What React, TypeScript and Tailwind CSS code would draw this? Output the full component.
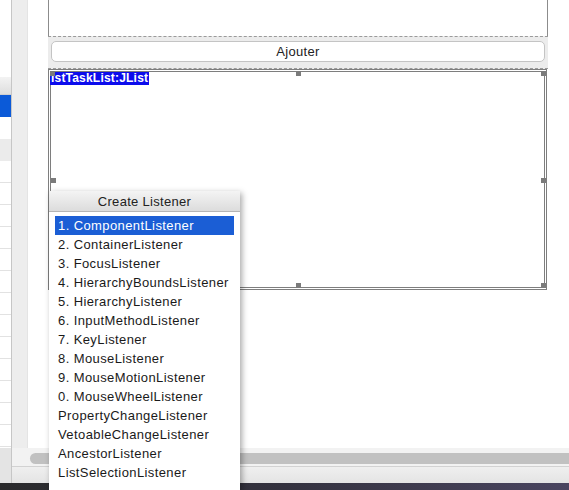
const listeners = [
  "1. ComponentListener",
  "2. ContainerListener",
  "3. FocusListener",
  "4. HierarchyBoundsListener",
  "5. HierarchyListener",
  "6. InputMethodListener",
  "7. KeyListener",
  "8. MouseListener",
  "9. MouseMotionListener",
  "0. MouseWheelListener",
  "PropertyChangeListener",
  "VetoableChangeListener",
  "AncestorListener",
  "ListSelectionListener",
]

const font = { fontFamily: '"Liberation Sans", Arial, sans-serif' }

function Handle({ className }: { className: string }) {
  return <div className={`absolute h-[5px] w-[5px] bg-[#7b7b7b] ${className}`} />
}

export default function App() {
  const rows = Array.from({ length: 13 })

  return (
    <div className="relative flex h-[490px] w-[569px] flex-col overflow-hidden bg-white text-[#1a1a1a]" style={font}>
      {/* main area */}
      <div className="flex h-[448px]">
        {/* properties table (clipped) */}
        <div className="flex w-[12px] flex-col border-r border-[#c6c6c6]">
          <div className="h-[77px] bg-white" />
          <div className="h-[18px] border-b border-[#cfcfcf] bg-gradient-to-b from-[#f3f3f3] to-[#dedede]" />
          <div className="h-[22px] bg-[#0b5ad8]" />
          <div className="h-[22px] bg-white" />
          <div className="h-[22px] bg-[#ebebeb]" />
          {rows.map((_, i) => (
            <div key={i} className="h-[22px] shrink-0 border-b border-[#e2e2e2] bg-white" />
          ))}
        </div>
        <div className="w-[16px] border-r border-[#e4e4e4] bg-[#ededed]" />
        <div className="w-[20px] bg-white" />

        {/* design canvas */}
        <div className="relative flex w-[500px] flex-col">
          <div className="h-[36px] border-x border-[#8c8c8c] bg-white" />
          <div className="h-[33px] border-y border-dashed border-[#9a9a9a] bg-[#ececec] pl-[3px] pr-[3px] pt-[4px]">
            <div className="flex h-[21px] items-center justify-center rounded-[5px] border border-[#c4c4c4] bg-white pt-[1px] text-[13px] tracking-[0.3px] text-[#222]">
              Ajouter
            </div>
          </div>
          <div className="relative h-[221px] w-[499px] border-[3px] border-double border-[#7e7e7e] bg-white">
            <div className="ml-[-1px] mt-[0px] h-[13px] w-fit bg-[#0c0cec] px-[1px] text-[12px] font-bold leading-[13px] tracking-[0.2px] text-white">
              istTaskList:JList
            </div>
            <Handle className="left-[-1px] top-[-1px]" />
            <Handle className="left-[245px] top-[-1px]" />
            <Handle className="right-[-2px] top-[-1px]" />
            <Handle className="left-[0px] top-[106px]" />
            <Handle className="right-[-2px] top-[106px]" />
            <Handle className="left-[245px] bottom-[-1px]" />
            <Handle className="right-[-2px] bottom-[-1px]" />
          </div>
          <div className="flex-1 bg-white" />
        </div>
        <div className="flex-1 bg-white" />
      </div>

      {/* horizontal scroll bar + window bottom */}
      <div className="flex h-[35px]">
        <div className="w-[12px] border-r border-[#c6c6c6] bg-[#e4e4e4]" />
        <div className="flex flex-1 flex-col">
          <div className="h-[18px] bg-[#f2f2f2] pl-[18px] pt-[5px]">
            <div className="h-[11px] rounded-l-full bg-[#c1c1c1]" />
          </div>
          <div className="flex-1 border-t border-[#d2d2d2] bg-gradient-to-b from-[#efefef] to-[#e4e4e4]" />
        </div>
      </div>
      <div className="h-[7px] bg-gradient-to-r from-[#2a2a2c] via-[#34323f] to-[#4a4560]" />

      {/* Create Listener popup */}
      <div className="absolute left-[49px] top-[191px] flex h-[299px] w-[191px] flex-col bg-white shadow-[2px_2px_6px_rgba(0,0,0,0.35)]">
        <div className="flex h-[21px] items-center justify-center border-b border-[#b5b5b5] bg-gradient-to-b from-[#f4f4f4] to-[#dcdcdc] pt-[1px] text-[13px] tracking-[0.3px] text-[#222]">
          Create Listener
        </div>
        <div className="flex flex-col px-[6px] pt-[4px]">
          {listeners.map((name, i) => (
            <div
              key={name}
              className={`flex h-[19px] items-center pl-[3px] text-[13px] tracking-[0.4px] ${i === 0 ? "bg-[#1b5ed5] text-white" : "text-[#1a1a1a]"}`}
            >
              {name}
            </div>
          ))}
        </div>
      </div>
    </div>
  )
}
